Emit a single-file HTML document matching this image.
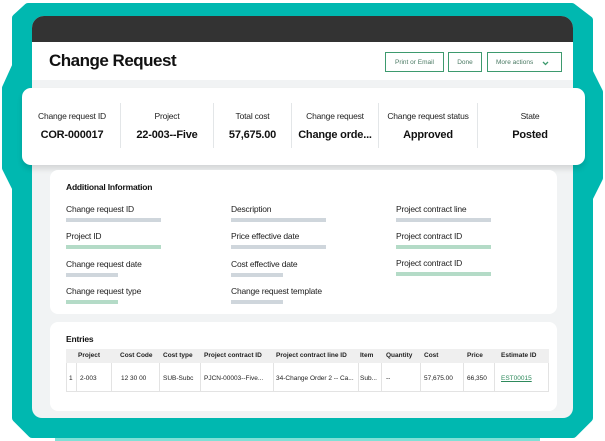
<!DOCTYPE html>
<html><head><meta charset="utf-8"><style>
*{margin:0;padding:0;box-sizing:border-box}
body{width:605px;height:441px;background:#fff;position:relative;overflow:hidden;font-family:"Liberation Sans",sans-serif;color:#111}
.a{position:absolute}
.t{position:absolute;white-space:nowrap;letter-spacing:-0.2px}
.lbl{font-size:8.5px;color:#222}
.bar{position:absolute;height:4px}
.g{background:#cfd6dc}.gr{background:#b4dbc7}
.btn{position:absolute;border:1.5px solid #3d9a6e;background:#fff;font-size:6.5px;color:#4b7a64;display:flex;align-items:center;justify-content:center}
.th{position:absolute;font-size:6.5px;font-weight:bold;color:#222;top:352px}
.td{position:absolute;font-size:6.5px;color:#222;top:375px}
.vl{position:absolute;top:363px;height:29px;width:1px;background:#e3e3e3}
</style></head><body>
<svg class="a" style="left:0;top:0" width="605" height="441"><polygon points="28,7 572,7 589,20 589,72 599,92 599,178 589,198 589,418 573,434 32,434 16,418 16,188 6,168 6,88 16,66 16,18" fill="#00b8b0" stroke="#00b8b0" stroke-width="8" stroke-linejoin="round"/><rect x="55" y="438" width="485" height="3" fill="#7fe0d6"/></svg>
<div class="a" style="left:32px;top:16px;width:541px;height:402px;background:#f1f3f4;border-radius:12px 12px 10px 10px;overflow:hidden">
 <div class="a" style="left:0;top:0;width:541px;height:26px;background:#333"></div>
 <div class="a" style="left:0;top:26px;width:541px;height:38px;background:#fff"></div>
</div>
<div class="t" style="left:49px;top:51px;font-size:17px;font-weight:bold;letter-spacing:-0.5px">Change Request</div>
<div class="btn" style="left:385px;top:52px;width:59px;height:20px">Print or Email</div>
<div class="btn" style="left:448px;top:52px;width:34px;height:20px">Done</div>
<div class="btn" style="left:487px;top:52px;width:75px;height:20px;justify-content:flex-start;padding-left:8px">More actions<svg style="position:absolute;right:12px;top:8px" width="7" height="5"><path d="M1 1L3.5 3.5L6 1" stroke="#3d9a6e" stroke-width="1.3" fill="none"/></svg></div>
<div class="a" style="left:22px;top:88px;width:563px;height:77px;background:#fff;border-radius:9px;box-shadow:0 4px 6px rgba(0,0,0,.12)"></div>
<div class="a" style="left:120px;top:103px;width:1px;height:45px;background:#e3e6e8"></div>
<div class="a" style="left:213px;top:103px;width:1px;height:45px;background:#e3e6e8"></div>
<div class="a" style="left:291px;top:103px;width:1px;height:45px;background:#e3e6e8"></div>
<div class="a" style="left:378px;top:103px;width:1px;height:45px;background:#e3e6e8"></div>
<div class="a" style="left:477px;top:103px;width:1px;height:45px;background:#e3e6e8"></div>
<div class="t lbl" style="left:22px;width:100px;text-align:center;top:111px">Change request ID</div>
<div class="t" style="left:22px;width:100px;text-align:center;top:129px;font-size:11px;font-weight:bold">COR-000017</div>
<div class="t lbl" style="left:121px;width:92px;text-align:center;top:111px">Project</div>
<div class="t" style="left:121px;width:92px;text-align:center;top:129px;font-size:11px;font-weight:bold">22-003--Five</div>
<div class="t lbl" style="left:214px;width:77px;text-align:center;top:111px">Total cost</div>
<div class="t" style="left:214px;width:77px;text-align:center;top:129px;font-size:11px;font-weight:bold">57,675.00</div>
<div class="t lbl" style="left:292px;width:86px;text-align:center;top:111px">Change request</div>
<div class="t" style="left:292px;width:86px;text-align:center;top:129px;font-size:11px;font-weight:bold">Change orde...</div>
<div class="t lbl" style="left:379px;width:98px;text-align:center;top:111px">Change request status</div>
<div class="t" style="left:379px;width:98px;text-align:center;top:129px;font-size:11px;font-weight:bold">Approved</div>
<div class="t lbl" style="left:478px;width:104px;text-align:center;top:111px">State</div>
<div class="t" style="left:478px;width:104px;text-align:center;top:129px;font-size:11px;font-weight:bold">Posted</div>

<div class="a" style="left:50px;top:170px;width:507px;height:144px;background:#fff;border-radius:8px"></div>
<div class="t" style="left:66px;top:182px;font-size:8.5px;font-weight:bold">Additional Information</div>
<div class="t lbl" style="left:66px;top:204px">Change request ID</div><div class="bar g" style="left:66px;top:218px;width:95px"></div>
<div class="t lbl" style="left:66px;top:231px">Project ID</div><div class="bar gr" style="left:66px;top:245px;width:95px"></div>
<div class="t lbl" style="left:66px;top:259px">Change request date</div><div class="bar g" style="left:66px;top:273px;width:52px"></div>
<div class="t lbl" style="left:66px;top:286px">Change request type</div><div class="bar gr" style="left:66px;top:300px;width:52px"></div>
<div class="t lbl" style="left:231px;top:204px">Description</div><div class="bar g" style="left:231px;top:218px;width:95px"></div>
<div class="t lbl" style="left:231px;top:231px">Price effective date</div><div class="bar g" style="left:231px;top:245px;width:95px"></div>
<div class="t lbl" style="left:231px;top:259px">Cost effective date</div><div class="bar g" style="left:231px;top:273px;width:52px"></div>
<div class="t lbl" style="left:231px;top:286px">Change request template</div><div class="bar g" style="left:231px;top:300px;width:52px"></div>
<div class="t lbl" style="left:396px;top:204px">Project contract line</div><div class="bar g" style="left:396px;top:218px;width:95px"></div>
<div class="t lbl" style="left:396px;top:231px">Project contract ID</div><div class="bar gr" style="left:396px;top:245px;width:95px"></div>
<div class="t lbl" style="left:396px;top:258px">Project contract ID</div><div class="bar gr" style="left:396px;top:272px;width:95px"></div>

<div class="a" style="left:50px;top:322px;width:507px;height:89px;background:#fff;border-radius:8px"></div>
<div class="t" style="left:66px;top:334px;font-size:8.5px;font-weight:bold">Entries</div>
<div class="a" style="left:66px;top:349px;width:483px;height:14px;background:#efefef"></div>
<div class="a" style="left:66px;top:363px;width:483px;height:29px;border:1px solid #e3e3e3;border-top:none"></div>
<div class="vl" style="left:76px"></div><div class="vl" style="left:111px"></div><div class="vl" style="left:159px"></div><div class="vl" style="left:200px"></div><div class="vl" style="left:273px"></div><div class="vl" style="left:358px"></div><div class="vl" style="left:381px"></div><div class="vl" style="left:420px"></div><div class="vl" style="left:463px"></div><div class="vl" style="left:494px"></div>
<div class="th" style="left:78px">Project</div><div class="th" style="left:120px">Cost Code</div><div class="th" style="left:163px">Cost type</div><div class="th" style="left:204px">Project contract ID</div><div class="th" style="left:276px">Project contract line ID</div><div class="th" style="left:360px">Item</div><div class="th" style="left:386px">Quantity</div><div class="th" style="left:424px">Cost</div><div class="th" style="left:467px">Price</div><div class="th" style="left:501px">Estimate ID</div>
<div class="td" style="left:69px">1</div><div class="td" style="left:80px">2-003</div><div class="td" style="left:121px">12 30 00</div><div class="td" style="left:163px">SUB-Subc</div><div class="td" style="left:204px">PJCN-00003--Five...</div><div class="td" style="left:276px">34-Change Order 2 -- Ca...</div><div class="td" style="left:360px">Sub...</div><div class="td" style="left:386px">--</div><div class="td" style="left:424px">57,675.00</div><div class="td" style="left:467px">66,350</div><div class="td" style="left:501px;color:#2e8a5c;text-decoration:underline">EST00015</div>
</body></html>
